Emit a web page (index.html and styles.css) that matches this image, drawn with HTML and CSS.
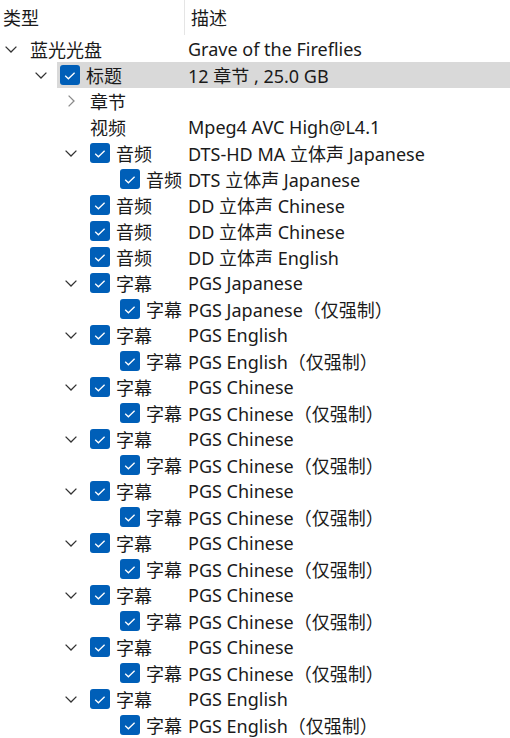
FILE: index.html
```html
<!DOCTYPE html>
<html lang="zh-CN">

<head>
    <meta charset="UTF-8">
    <title>光盘内容</title>
    <link rel="stylesheet" href="styles.css">
</head>

<body>
    <svg width="0" height="0" class="defs">
        <symbol id="down" viewBox="0 0 12 7">
            <path d="M0.6 0.6 L6 6 L11.4 0.6" fill="none" stroke="currentColor" stroke-width="1.3"/>
        </symbol>
        <symbol id="right" viewBox="0 0 7 12">
            <path d="M0.6 0.6 L6 6 L0.6 11.4" fill="none" stroke="currentColor" stroke-width="1.3"/>
        </symbol>
        <symbol id="check" viewBox="0 0 20 20">
            <path d="M5.2 10.8 L8.4 13.8 L14.6 7.8" fill="none" stroke="#fff" stroke-width="1.3"/>
        </symbol>
    </svg>

    <div class="header">
        <div class="col-type">类型</div>
        <div class="col-desc">描述</div>
    </div>

    <div class="tree">
        <div class="row l0">
            <span class="indent"></span>
            <span class="twisty"><svg class="chev" width="12" height="7"><use href="#down"/></svg></span>
            <div class="node"><span class="name">蓝光光盘</span><span class="desc">Grave of the Fireflies</span></div>
        </div>
        <div class="row l1 selected">
            <span class="indent"></span>
            <span class="twisty"><svg class="chev" width="12" height="7"><use href="#down"/></svg></span>
            <div class="node"><span class="name"><svg class="box"><use href="#check"/></svg>标题</span><span class="desc">12 章节 , 25.0 GB</span></div>
        </div>
        <div class="row l2">
            <span class="indent"></span>
            <span class="twisty"><svg class="chev closed" width="7" height="12"><use href="#right"/></svg></span>
            <div class="node"><span class="name">章节</span><span class="desc"></span></div>
        </div>
        <div class="row l2">
            <span class="indent"></span>
            <span class="twisty"></span>
            <div class="node"><span class="name">视频</span><span class="desc">Mpeg4 AVC High@L4.1</span></div>
        </div>
        <div class="row l2">
            <span class="indent"></span>
            <span class="twisty"><svg class="chev" width="12" height="7"><use href="#down"/></svg></span>
            <div class="node"><span class="name"><svg class="box"><use href="#check"/></svg>音频</span><span class="desc">DTS-HD MA 立体声 Japanese</span></div>
        </div>
        <div class="row l3">
            <span class="indent"></span>
            <span class="twisty"></span>
            <div class="node"><span class="name"><svg class="box"><use href="#check"/></svg>音频</span><span class="desc">DTS 立体声 Japanese</span></div>
        </div>
        <div class="row l2">
            <span class="indent"></span>
            <span class="twisty"></span>
            <div class="node"><span class="name"><svg class="box"><use href="#check"/></svg>音频</span><span class="desc">DD 立体声 Chinese</span></div>
        </div>
        <div class="row l2">
            <span class="indent"></span>
            <span class="twisty"></span>
            <div class="node"><span class="name"><svg class="box"><use href="#check"/></svg>音频</span><span class="desc">DD 立体声 Chinese</span></div>
        </div>
        <div class="row l2">
            <span class="indent"></span>
            <span class="twisty"></span>
            <div class="node"><span class="name"><svg class="box"><use href="#check"/></svg>音频</span><span class="desc">DD 立体声 English</span></div>
        </div>
    </div>

    <script>
        // 字幕轨道
        var subs = ['Japanese', 'English', 'Chinese', 'Chinese', 'Chinese', 'Chinese', 'Chinese', 'Chinese', 'English'];
        var tree = document.querySelector('.tree');

        function row(level, twisty, desc) {
            var html = '<div class="row l' + level + '">' +
                '<span class="indent"></span>' +
                '<span class="twisty">' + (twisty ? '<svg class="chev" width="12" height="7"><use href="#down"/></svg>' : '') + '</span>' +
                '<div class="node"><span class="name"><svg class="box"><use href="#check"/></svg>字幕</span>' +
                '<span class="desc">' + desc + '</span></div></div>';
            tree.insertAdjacentHTML('beforeend', html);
        }

        subs.forEach(function (lang) {
            row(2, true, 'PGS ' + lang);
            row(3, false, 'PGS ' + lang + '（仅强制）');
        });
    </script>
</body>

</html>
```

FILE: styles.css
```css
* {
    margin: 0;
    padding: 0;
    box-sizing: border-box;
}

body {
    font-family: 'Noto Sans', 'Noto Sans CJK SC', sans-serif;
    font-size: 18px;
    color: #1a1a1a;
    background-color: #ffffff;
    overflow: hidden;
}

.defs {
    position: absolute;
}

.header {
    display: flex;
    height: 36px;
    align-items: center;
}

.header .col-type {
    width: 184px;
    padding-left: 3px;
    padding-bottom: 2px;
}

.header .col-desc {
    flex: 1;
    border-left: 1px solid #e5e5e5;
    padding-left: 6px;
    padding-bottom: 2px;
    height: 35px;
    align-self: flex-start;
    display: flex;
    align-items: center;
}

.row {
    display: flex;
    height: 26px;
    align-items: center;
    white-space: nowrap;
}

.twisty {
    width: 27px;
    height: 100%;
    display: flex;
    align-items: center;
    padding-left: 5px;
}

.chev {
    color: #333;
}

.chev.closed {
    color: #8a8a8a;
    margin-left: 3px;
}

.node {
    flex: 1;
    height: 100%;
    display: flex;
    align-items: center;
    padding-left: 3px;
}

.selected .node {
    background-color: #d9d9d9;
}

.name {
    display: flex;
    align-items: center;
}

.box {
    width: 20px;
    height: 20px;
    background-color: #005fb8;
    border-radius: 3px;
    margin-right: 6px;
    flex-shrink: 0;
}

.l0 .indent { width: 0; }
.l1 .indent { width: 30px; }
.l2 .indent { width: 60px; }
.l3 .indent { width: 90px; }

.l0 .name { width: 158px; }
.l1 .name { width: 128px; }
.l2 .name { width: 98px; }
.l3 .name { width: 68px; }
```
